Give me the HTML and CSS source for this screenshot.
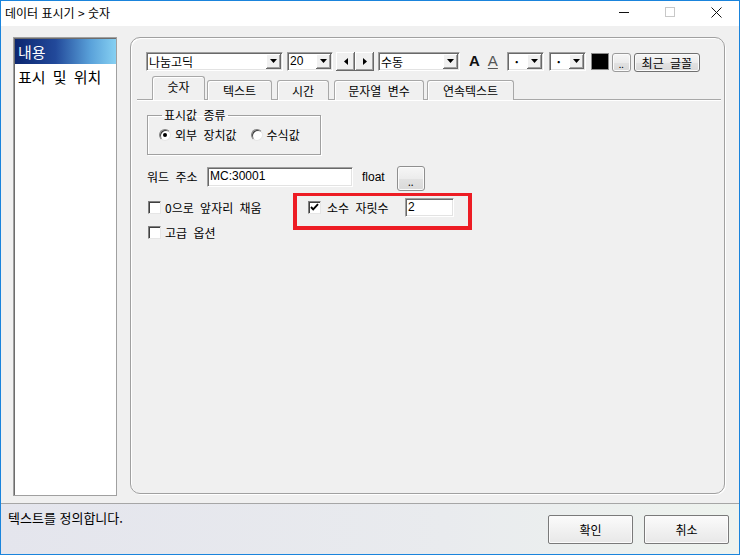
FILE: index.html
```html
<!DOCTYPE html>
<html lang="ko">
<head>
<meta charset="utf-8">
<title>데이터 표시기</title>
<link rel="stylesheet" href="styles.css">
</head>
<body>
<div class="window">
  <div class="titlebar">
    <span class="title">데이터 표시기 &gt; 숫자</span>
    <div class="caps">
      <span class="cap"><svg width="10" height="10" viewBox="0 0 10 10"><path d="M0 5.5h10" stroke="#111" stroke-width="1"/></svg></span>
      <span class="cap"><svg width="10" height="10" viewBox="0 0 10 10"><rect x="0.5" y="0.5" width="9" height="9" fill="none" stroke="#c8c8c8" stroke-width="1"/></svg></span>
      <span class="cap"><svg width="11" height="11" viewBox="0 0 11 11"><path d="M0.5 0.5L10.5 10.5M10.5 0.5L0.5 10.5" stroke="#111" stroke-width="1"/></svg></span>
    </div>
  </div>

  <div class="main">
    <ul class="navlist">
      <li class="nav-item selected">내용</li>
      <li class="nav-item">표시 및 위치</li>
    </ul>

    <div class="panel">
      <div class="toolbar">
        <div class="combo font-combo"><span class="combo-text">나눔고딕</span><span class="dd"><svg width="7" height="4" viewBox="0 0 7 4"><path d="M0 0h7L3.5 4z"/></svg></span></div>
        <div class="combo size-combo"><span class="combo-text">20</span><span class="dd"><svg width="7" height="4" viewBox="0 0 7 4"><path d="M0 0h7L3.5 4z"/></svg></span></div>
        <span class="arrow-btn arrow-left"><svg width="4" height="7" viewBox="0 0 4 7"><path d="M4 0v7L0 3.5z"/></svg></span>
        <span class="arrow-btn"><svg width="4" height="7" viewBox="0 0 4 7"><path d="M0 0v7L4 3.5z"/></svg></span>
        <div class="combo mode-combo"><span class="combo-text">수동</span><span class="dd"><svg width="7" height="4" viewBox="0 0 7 4"><path d="M0 0h7L3.5 4z"/></svg></span></div>
        <span class="glyph-a bold-a">A</span>
        <span class="glyph-a under-a">A</span>
        <div class="combo small-combo first-small"><span class="combo-text dot">·</span><span class="dd"><svg width="7" height="4" viewBox="0 0 7 4"><path d="M0 0h7L3.5 4z"/></svg></span></div>
        <div class="combo small-combo"><span class="combo-text dot">·</span><span class="dd"><svg width="7" height="4" viewBox="0 0 7 4"><path d="M0 0h7L3.5 4z"/></svg></span></div>
        <span class="swatch"></span>
        <span class="btn dots-btn">..</span>
        <span class="btn recent-btn">최근 글꼴</span>
      </div>

      <div class="tabs">
        <span class="tab active t1">숫자</span>
        <span class="tab t2">텍스트</span>
        <span class="tab t3">시간</span>
        <span class="tab t4">문자열 변수</span>
        <span class="tab t5">연속텍스트</span>
      </div>

      <div class="pane">
        <fieldset class="group">
          <legend>표시값 종류</legend>
          <div class="radio-row">
            <span class="radio checked"></span><span class="radio-label">외부 장치값</span>
            <span class="radio second"></span><span class="radio-label">수식값</span>
          </div>
        </fieldset>

        <div class="word-row">
          <span class="word-label">워드 주소</span>
          <span class="input addr-input">MC:30001</span>
          <span class="float-label">float</span>
          <span class="btn browse-btn">..</span>
        </div>

        <div class="check-row">
          <span class="check-item zero-fill"><span class="checkbox"></span><span class="check-label">0으로 앞자리 채움</span></span>
          <span class="check-item decimals"><span class="checkbox"><svg width="11" height="11" viewBox="0 0 11 11"><path d="M2 5L4.2 7.4L9 2.2" fill="none" stroke="#000" stroke-width="1.9"/></svg></span><span class="check-label">소수 자릿수</span></span>
          <span class="input digits-input">2</span>
        </div>

        <div class="check-row advanced">
          <span class="check-item"><span class="checkbox"></span><span class="check-label">고급 옵션</span></span>
        </div>

        <div class="highlight"></div>
      </div>
    </div>
  </div>

  <div class="statusbar">
    <span class="status-text">텍스트를 정의합니다.</span>
    <div class="dialog-btns">
      <span class="btn dlg-btn">확인</span>
      <span class="btn dlg-btn">취소</span>
    </div>
  </div>
</div>
</body>
</html>
```

FILE: styles.css
```css
* { box-sizing: border-box; }
html, body { margin: 0; padding: 0; }
body {
  width: 740px;
  height: 555px;
  overflow: hidden;
  background: #fff;
  font-family: "Liberation Sans", "Noto Sans CJK KR", sans-serif;
  font-size: 12px;
  color: #000;
}

.window {
  width: 740px;
  height: 555px;
  border: 1px solid #1a84dc;
  background: #f0f0f0;
  display: flex;
  flex-direction: column;
}

/* title bar */
.titlebar {
  height: 25px;
  flex: none;
  background: #fff;
  display: flex;
  align-items: center;
}
.title {
  padding-left: 4px;
  font-family: "Noto Sans CJK KR", sans-serif;
  font-size: 12px;
  line-height: 14px;
  margin-top: -2px;
  color: #000;
}
.caps { margin-left: auto; display: flex; height: 25px; margin-top: -3px; }
.cap { width: 46px; height: 25px; display: flex; align-items: center; justify-content: center; }

/* main area */
.main {
  height: 477px;
  flex: none;
  display: flex;
  align-items: flex-start;
  gap: 13px;
  padding: 11px 14px 0 12px;
}

.navlist {
  list-style: none;
  margin: 0;
  padding: 1px 0 0 1px;
  width: 104px;
  height: 459px;
  background: #fff;
  border: 1px solid #a0a0a0;
  box-shadow: inset 1px 1px 0 #6d6d6d;
  font-family: "Noto Sans CJK KR", sans-serif;
  font-size: 15px;
  word-spacing: 3px;
}
.nav-item {
  height: 25px;
  line-height: 25px;
  padding-left: 3px;
  white-space: nowrap;
}
.nav-item.selected {
  color: #fff;
  background: linear-gradient(90deg, #0b2670 0%, #22499a 40%, #5aa2da 75%, #86d0f2 100%);
}

.panel {
  width: 595px;
  height: 457px;
  border: 1px solid #a0a0a0;
  border-radius: 10px;
  box-shadow: inset 1px 1px 0 #fff, 1px 1px 0 #fff;
  padding: 14px 3px 0 6px;
  display: flex;
  flex-direction: column;
  word-spacing: 3px;
}

/* toolbar */
.toolbar {
  display: flex;
  align-items: flex-start;
  height: 21px;
  margin-left: 9px;
}
.combo {
  height: 19px;
  background: #fff;
  border: 1px solid;
  border-color: #a0a0a0 #fff #fff #a0a0a0;
  box-shadow: inset 1px 1px 0 #696969, inset -1px -1px 0 #e3e3e3;
  padding: 1px;
  display: flex;
  align-items: stretch;
}
.combo-text {
  flex: 1;
  padding-left: 1px;
  line-height: 15px;
  font-family: "Noto Sans CJK KR", sans-serif;
  font-size: 12px;
  white-space: nowrap;
  overflow: hidden;
}
.size-combo .combo-text { font-family: "Liberation Sans", sans-serif; }
.combo-text.dot { padding-left: 6px; font-weight: bold; }
.dd {
  width: 15px;
  background: #f0f0f0;
  box-shadow: inset -1px -1px 0 #696969, inset 1px 1px 0 #fff, inset -2px -2px 0 #a0a0a0;
  display: flex;
  align-items: center;
  justify-content: center;
  padding-bottom: 1px;
}
.font-combo { width: 137px; }
.size-combo { width: 46px; margin-left: 4px; }
.mode-combo { width: 82px; margin-left: 4px; }
.small-combo { width: 37px; margin-left: 5px; }
.small-combo.first-small { margin-left: 9px; }

.arrow-btn {
  width: 19px;
  height: 19px;
  background: #f0f0f0;
  box-shadow: inset -1px -1px 0 #696969, inset 1px 1px 0 #fff, inset -2px -2px 0 #a0a0a0;
  display: flex;
  align-items: center;
  justify-content: center;
}
.arrow-left { margin-left: 3px; }

.glyph-a {
  font-family: "Liberation Sans", sans-serif;
  font-size: 15px;
  line-height: 18px;
}
.bold-a { font-weight: bold; margin-left: 9px; color: #111; }
.under-a { margin-left: 8px; color: #555; text-decoration: underline; text-underline-offset: 2px; }

.swatch {
  width: 18px;
  height: 17px;
  margin-left: 5px;
  margin-top: 1px;
  background: #000;
  border: 1px solid #8a8a8a;
}

.btn {
  display: flex;
  align-items: center;
  justify-content: center;
  border: 1px solid #707070;
  border-radius: 3px;
  background: linear-gradient(#f6f6f6 0%, #ececec 50%, #e2e2e2 51%, #d9d9d9 100%);
  box-shadow: inset 0 0 0 1px #fbfbfb;
  font-family: "Noto Sans CJK KR", sans-serif;
  font-size: 12px;
  color: #000;
  white-space: nowrap;
}
.dots-btn {
  width: 19px;
  height: 19px;
  margin-left: 3px;
  margin-top: 1px;
  font-size: 9px;
  line-height: 1;
  padding-top: 4px;
  border-color: #9a9a9a;
}
.recent-btn {
  width: 66px;
  height: 19px;
  margin-left: 3px;
  margin-top: 1px;
  padding-bottom: 1px;
}

/* tabs */
.tabs {
  display: flex;
  align-items: flex-end;
  height: 23px;
  margin-top: 4px;
  padding-left: 15px;
  position: relative;
  z-index: 1;
  margin-bottom: -1px;
}
.tab {
  height: 20px;
  border: 1px solid #a8a8a8;
  border-bottom: none;
  border-radius: 3px 3px 0 0;
  background: #f0f0f0;
  box-shadow: inset 1px 1px 0 #fff;
  font-family: "Noto Sans CJK KR", sans-serif;
  font-size: 12px;
  display: flex;
  align-items: center;
  justify-content: center;
  padding-bottom: 1px;
  white-space: nowrap;
}
.tab.active {
  height: 24px;
  padding-bottom: 4px;
  background: #f0f0f0;
}
.t1 { width: 53px; }
.t2 { width: 65px; margin-left: 2px; }
.t3 { width: 52px; margin-left: 5px; }
.t4 { width: 90px; margin-left: 5px; }
.t5 { width: 87px; margin-left: 3px; }

/* pane */
.pane {
  flex: 1;
  position: relative;
  border-top: 1px solid #a8a8a8;
  box-shadow: inset 0 1px 0 #fff;
  padding: 8px 0 0 10px;
  display: flex;
  flex-direction: column;
  align-items: flex-start;
}

.group {
  margin: 0;
  width: 174px;
  height: 47px;
  padding: 0 0 0 11px;
  border: 1px solid #a0a0a0;
  box-shadow: inset 1px 1px 0 #fff, 1px 1px 0 #fff;
}
.group legend {
  margin-left: 3px;
  padding: 0 2px;
  font-family: "Noto Sans CJK KR", sans-serif;
  font-size: 12px;
  line-height: 14px;
}
.radio-row {
  display: flex;
  align-items: center;
  height: 16px;
  margin-top: 5px;
}
.radio {
  width: 12px;
  height: 12px;
  border-radius: 50%;
  border: 1px solid;
  border-color: #808080 #e6e6e6 #e6e6e6 #808080;
  background: #fff;
  box-shadow: inset 1px 1px 0 #404040;
  position: relative;
  flex: none;
}
.radio.checked::after {
  content: "";
  position: absolute;
  left: 3px;
  top: 3px;
  width: 4px;
  height: 4px;
  border-radius: 50%;
  background: #000;
}
.radio.second { margin-left: 14px; }
.radio-label {
  margin-left: 4px;
  font-family: "Noto Sans CJK KR", sans-serif;
  font-size: 12px;
  line-height: 14px;
}

.word-row {
  display: flex;
  align-items: flex-start;
  margin-top: 11px;
  height: 25px;
}
.word-label {
  width: 60px;
  margin-top: 3px;
  font-family: "Noto Sans CJK KR", sans-serif;
  font-size: 12px;
  line-height: 16px;
}
.input {
  height: 20px;
  background: #fff;
  border: 1px solid;
  border-color: #a0a0a0 #fff #fff #a0a0a0;
  box-shadow: inset 1px 1px 0 #696969, inset -1px -1px 0 #e3e3e3;
  padding: 1px 2px;
  font-family: "Liberation Sans", sans-serif;
  font-size: 12px;
  line-height: 15px;
}
.addr-input { width: 146px; margin-top: 1px; }
.float-label {
  margin-left: 9px;
  margin-top: 3px;
  line-height: 16px;
  font-family: "Liberation Sans", sans-serif;
}
.browse-btn {
  width: 28px;
  height: 25px;
  margin-left: 12px;
  font-size: 10px;
  padding-top: 6px;
  border-color: #8f8f8f;
}

.check-row {
  display: flex;
  align-items: center;
  height: 19px;
  margin-top: 7px;
}
.check-row.advanced { margin-top: 6px; }
.check-item {
  display: flex;
  align-items: center;
  margin-left: 1px;
}
.zero-fill { width: 160px; }
.decimals { width: 97px; margin-left: 0; }
.checkbox {
  width: 13px;
  height: 13px;
  flex: none;
  background: #fff;
  border: 1px solid;
  border-color: #808080 #e6e6e6 #e6e6e6 #808080;
  box-shadow: inset 1px 1px 0 #404040;
  display: flex;
  align-items: center;
  justify-content: center;
}
.check-label {
  margin-left: 4px;
  font-family: "Noto Sans CJK KR", sans-serif;
  font-size: 12px;
  line-height: 14px;
}
.decimals .check-label { margin-left: 6px; }
.digits-input { width: 49px; height: 19px; }

.highlight {
  position: absolute;
  left: 156px;
  top: 93px;
  width: 179px;
  height: 37px;
  border: 4px solid #ed1c24;
  border-top-width: 3px;
}

/* status bar */
.statusbar {
  flex: 1;
  border-top: 1px solid #a6a6a6;
  background: linear-gradient(90deg, #e4e5ed 0%, #e9ebee 60%, #eef3ee 100%);
  display: flex;
  align-items: flex-start;
  padding: 0 10px 0 7px;
}
.status-text {
  margin-top: 6px;
  font-family: "Noto Sans CJK KR", sans-serif;
  font-size: 13px;
  line-height: 16px;
}
.dialog-btns {
  margin-left: auto;
  margin-top: 11px;
  display: flex;
  gap: 11px;
}
.dlg-btn {
  width: 85px;
  height: 29px;
  border-color: #7a7a7a;
  border-radius: 2px;
  background: linear-gradient(#fbfbfb 0%, #f1f1f1 50%, #e8e8e8 100%);
}
```
